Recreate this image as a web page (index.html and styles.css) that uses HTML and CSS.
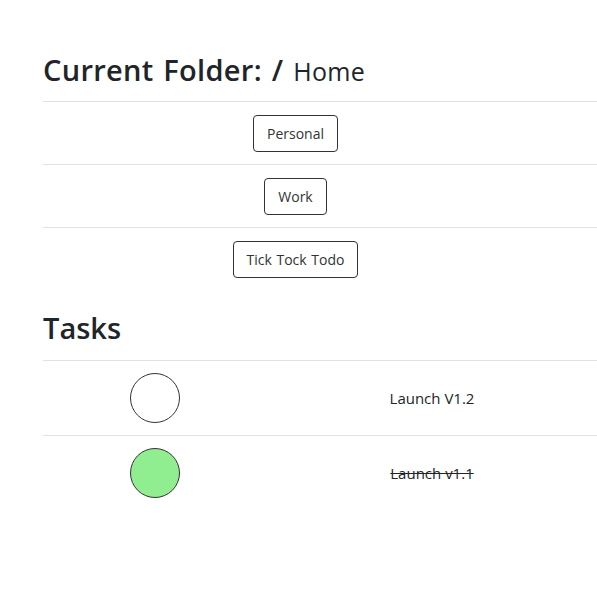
FILE: index.html
```html
<!DOCTYPE html>
<html>
<head>
<meta charset="utf-8">
<link rel="stylesheet" href="styles.css">
</head>
<body>
<main class="page">
  <h2 class="title folder-title">Current Folder: / <small class="crumb">Home</small></h2>
  <div class="folders">
    <div class="folder-row"><div class="cell"><button class="btn">Personal</button></div><div></div></div>
    <div class="folder-row"><div class="cell"><button class="btn">Work</button></div><div></div></div>
    <div class="folder-row"><div class="cell"><button class="btn">Tick Tock Todo</button></div><div></div></div>
  </div>
  <h2 class="title tasks-title">Tasks</h2>
  <div class="tasks">
    <div class="task-row">
      <div class="cell"><span class="check"></span></div>
      <div class="cell task-name">Launch V1.2</div>
    </div>
    <div class="task-row">
      <div class="cell"><span class="check done"></span></div>
      <div class="cell task-name"><s>Launch v1.1</s></div>
    </div>
  </div>
</main>
</body>
</html>
```
FILE: styles.css
```css
html, body {
  margin: 0;
  padding: 0;
  background: #fff;
}
body {
  font-family: "Open Sans", "Noto Sans", sans-serif;
  color: #212529;
}
.page {
  padding: 53px 0 0 43px;
}
.title {
  margin: 0;
  font-size: 29px;
  font-weight: 600;
  line-height: 1.2;
  color: #212529;
}
.crumb {
  font-size: 25px;
  font-weight: 400;
}
.folder-title {
  padding-bottom: 13px;
  letter-spacing: 0.3px;
  word-spacing: 2px;
}
.folder-row {
  display: grid;
  grid-template-columns: 505px 1fr;
  border-top: 1px solid #dee2e6;
}
.folder-row .cell {
  display: flex;
  justify-content: center;
  padding: 13px 0 12px;
}
.btn {
  font-family: inherit;
  font-size: 14px;
  color: #333;
  background: #fff;
  border: 1px solid #333;
  border-radius: 4px;
  height: 37px;
  padding: 0 13px;
  line-height: 35px;
  word-spacing: 1px;
}
.tasks-title {
  padding-top: 21px;
  padding-bottom: 14px;
}
.task-row {
  display: grid;
  grid-template-columns: 224px 1fr;
  border-top: 1px solid #dee2e6;
}
.task-row .cell {
  display: flex;
  justify-content: center;
  align-items: center;
  padding: 12px 0;
}
.check {
  display: block;
  width: 48px;
  height: 48px;
  border: 1px solid #333;
  border-radius: 50%;
  background: #fff;
}
.check.done {
  background: #90ee90;
}
.task-name {
  font-size: 15px;
  color: #212529;
}
.task-name s {
  text-decoration-thickness: 1px;
}
```
